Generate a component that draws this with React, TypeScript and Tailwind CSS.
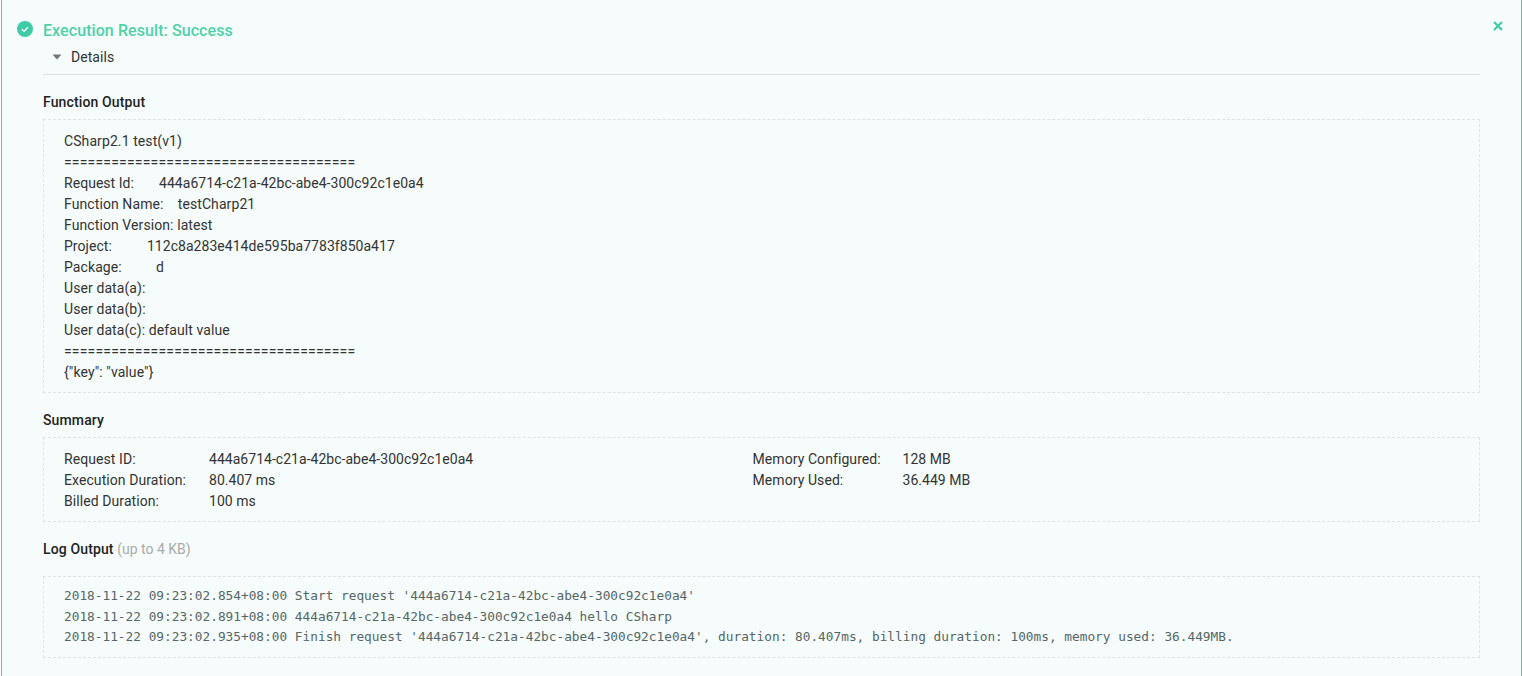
const FUNCTION_OUTPUT = [
  { text: 'CSharp2.1 test(v1)', wide: true },
  { text: '=====================================', wide: false },
  { label: 'Request Id:', pad: 'w-[95px]', text: '444a6714-c21a-42bc-abe4-300c92c1e0a4', wide: false },
  { text: 'Function Name:    testCharp21', wide: true },
  { text: 'Function Version: latest', wide: true },
  { text: 'Project:          112c8a283e414de595ba7783f850a417', wide: false },
  { label: 'Package:', pad: 'w-[92px]', text: 'd', wide: true },
  { text: 'User data(a):', wide: true },
  { text: 'User data(b):', wide: true },
  { text: 'User data(c): default value', wide: true },
  { text: '=====================================', wide: false },
  { text: '{"key": "value"}', wide: true },
]

const LOG_LINES = [
  "2018-11-22 09:23:02.854+08:00 Start request '444a6714-c21a-42bc-abe4-300c92c1e0a4'",
  '2018-11-22 09:23:02.891+08:00 444a6714-c21a-42bc-abe4-300c92c1e0a4 hello CSharp',
  "2018-11-22 09:23:02.935+08:00 Finish request '444a6714-c21a-42bc-abe4-300c92c1e0a4', duration: 80.407ms, billing duration: 100ms, memory used: 36.449MB.",
]

function Row({ label, value, labelWidth }: { label: string; value: string; labelWidth: string }) {
  return (
    <div className="flex h-[21px] items-center">
      <span className={`${labelWidth} shrink-0 tracking-[0.08px]`}>{label}</span>
      <span className="tracking-[0.03px]">{value}</span>
    </div>
  )
}

function Heading({ children }: { children: React.ReactNode }) {
  return <div className="h-[21px] text-[14px] leading-[21px] font-medium tracking-[0.13px] text-[#222]">{children}</div>
}

export default function App() {
  return (
    <div className="h-[676px] w-[1522px] overflow-hidden bg-white pl-px font-['Roboto',sans-serif] text-[14px] text-[#333]">
      <div className="relative h-full border-x border-[#5cc9a7] bg-[#f6fcfb] pt-[19px] pr-[41px] pl-[41px]">
        <svg className="absolute top-[21px] left-[15px]" width="16" height="16" viewBox="0 0 16 16">
          <circle cx="8" cy="8" r="8" fill="#3dcca6" />
          <path d="M4.8 8.2l2.3 2.1 3.9-4" fill="none" stroke="#fff" strokeWidth="1.3" />
        </svg>
        <svg className="absolute top-[20px] right-[17px]" width="12" height="12" viewBox="0 0 12 12">
          <path d="M2 2l8 8M10 2l-8 8" fill="none" stroke="#3dcca6" strokeWidth="2.2" />
        </svg>

        <div className="h-[24px] text-[16px] leading-[24px] font-medium tracking-[0.08px] text-[#4fd1aa]">
          Execution Result: Success
        </div>
        <div className="flex h-[32px] items-center border-b border-[#e1e3e3] pb-[3px]">
          <svg className="ml-[9px]" width="10" height="6" viewBox="0 0 10 6">
            <path d="M0.5 0.5h9L5 5.5z" fill="#777" />
          </svg>
          <span className="ml-[9px] tracking-[0.05px]">Details</span>
        </div>

        <div className="mt-[17px]">
          <Heading>Function Output</Heading>
          <div className="mt-[6px] h-[274px] border border-dashed border-[#e0e4e3] px-[20px] pt-[11px]">
            {FUNCTION_OUTPUT.map((line, i) => (
              <div
                key={i}
                className={
                  line.text.startsWith('=')
                    ? 'flex h-[21px] leading-[21px] tracking-[0.19px] whitespace-pre'
                    : line.wide
                      ? 'flex h-[21px] leading-[21px] tracking-[0.09px] whitespace-pre'
                      : 'flex h-[21px] leading-[21px] tracking-[0.04px] whitespace-pre'
                }
              >
                {line.label && <span className={line.pad}>{line.label}</span>}
                <span>{line.text}</span>
              </div>
            ))}
          </div>
        </div>

        <div className="mt-[17px]">
          <Heading>Summary</Heading>
          <div className="mt-[6px] flex h-[85px] border border-dashed border-[#e0e4e3] px-[20px] pt-[11px]">
            <div className="w-[688.5px]">
              <Row labelWidth="w-[145px]" label="Request ID:" value="444a6714-c21a-42bc-abe4-300c92c1e0a4" />
              <Row labelWidth="w-[145px]" label="Execution Duration:" value="80.407 ms" />
              <Row labelWidth="w-[145px]" label="Billed Duration:" value="100 ms" />
            </div>
            <div className="w-[400px]">
              <Row labelWidth="w-[150px]" label="Memory Configured:" value="128 MB" />
              <Row labelWidth="w-[150px]" label="Memory Used:" value="36.449 MB" />
            </div>
          </div>
        </div>

        <div className="mt-[17px]">
          <Heading>
            Log Output <span className="font-normal tracking-normal text-[#aaa]">(up to 4 KB)</span>
          </Heading>
          <div className="mt-[16px] h-[82px] border border-dashed border-[#e0e4e3] px-[20px] pt-[9px] font-['DejaVu_Sans_Mono',monospace] text-[12.79px] text-[#566]">
            {LOG_LINES.map((line, i) => (
              <div key={i} className="h-[20.5px] leading-[20.5px] whitespace-pre">{line}</div>
            ))}
          </div>
        </div>
      </div>
    </div>
  )
}
